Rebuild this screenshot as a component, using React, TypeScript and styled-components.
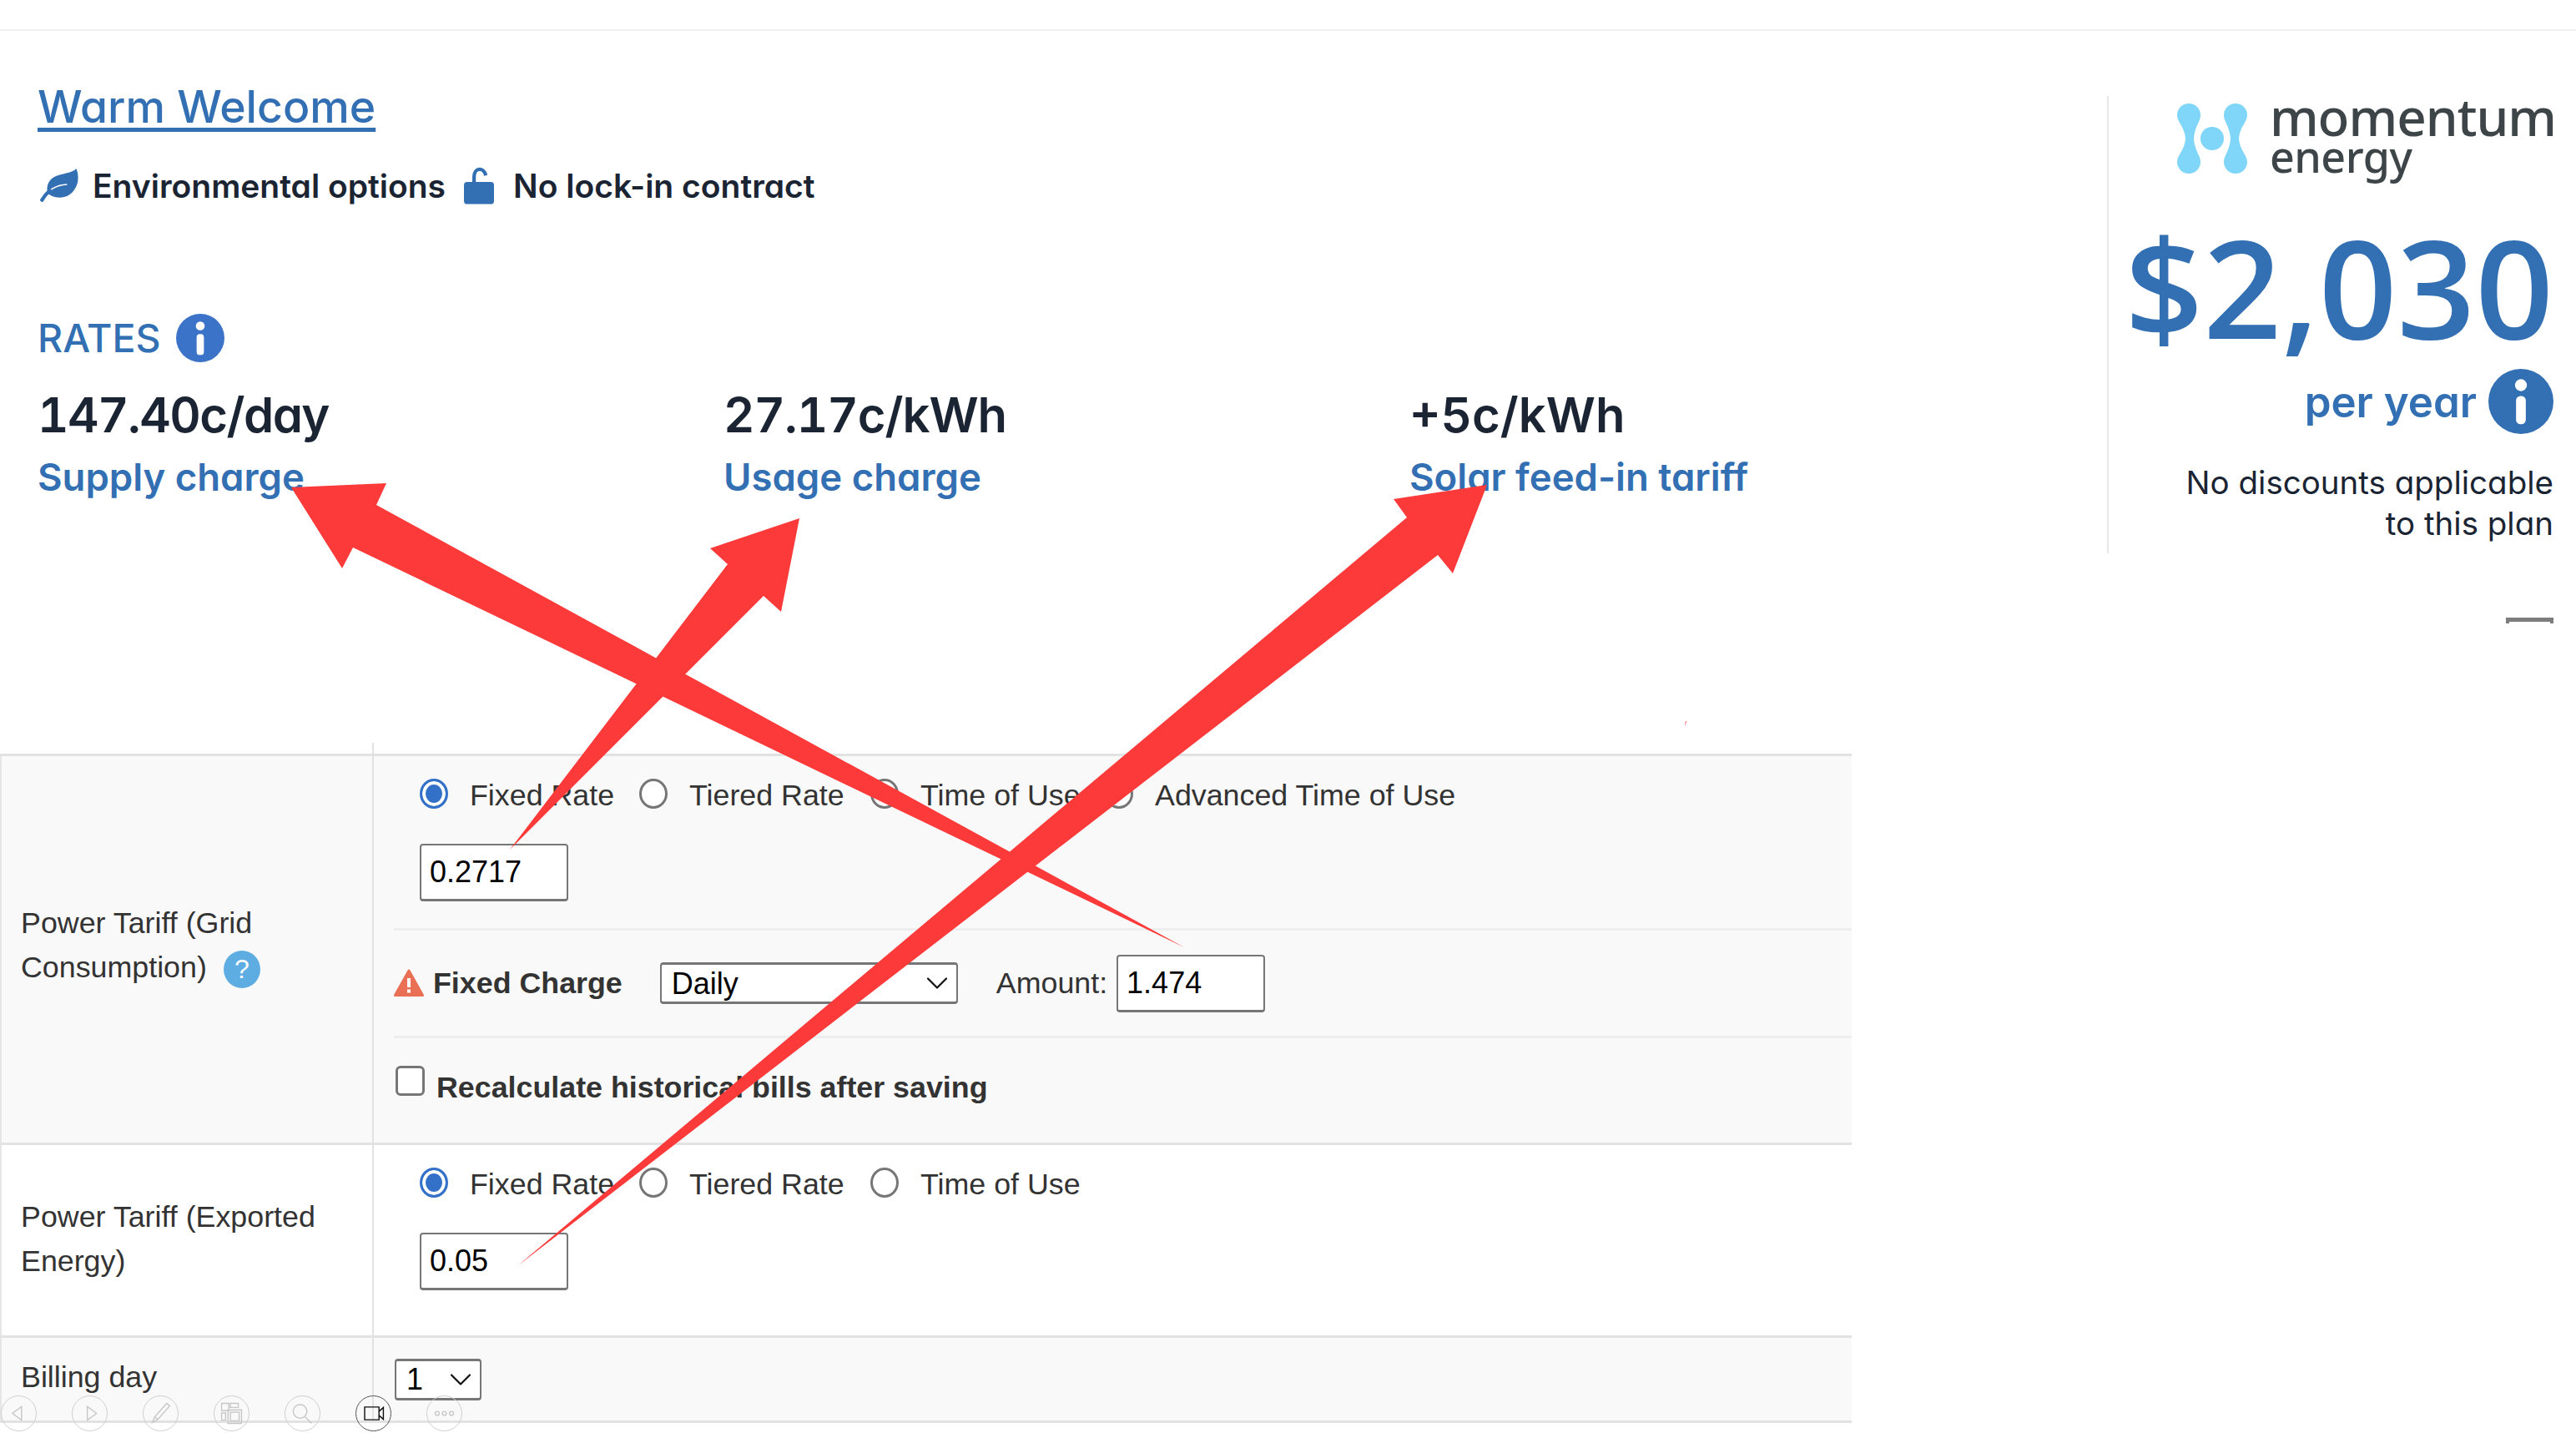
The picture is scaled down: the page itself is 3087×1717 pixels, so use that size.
import styled, { createGlobalStyle } from 'styled-components';
import { ChevronDown } from 'lucide-react';

const GlobalStyle = createGlobalStyle`
  html, body {
    margin: 0;
    padding: 0;
    background: #fff;
  }
`;

const blue = '#336fb3';
const ink = '#1b2433';
const uiFont = `Inter, "Noto Sans", sans-serif`;
const tableFont = `"Liberation Sans", Arial, sans-serif`;

const Page = styled.div`
  position: relative;
  width: 3087px;
  height: 1717px;
  overflow: hidden;
  font-family: ${uiFont};
  font-feature-settings: 'cv11' 1;
  color: ${ink};
`;

const TopBar = styled.div`
  height: 35px;
  border-bottom: 2px solid #f0f0f0;
`;

const Summary = styled.section`
  display: flex;
  height: 853px;
`;

const PlanInfo = styled.div`
  flex: 1;
  padding: 61px 0 0 45px;
`;

const PlanTitle = styled.a`
  display: inline-block;
  font-size: 53.500px;
  line-height: 60px;
  font-weight: 500;
  color: ${blue};
  text-decoration: underline;
  text-decoration-thickness: 5px;
  text-underline-offset: 6px;
`;

const Features = styled.div`
  display: flex;
  align-items: center;
  height: 50px;
  margin: 39px 0 0 3px;
  font-size: 39px;
  font-weight: 600;
`;

const Feature = styled.div`
  display: flex;
  align-items: center;
  gap: ${({ $gap }: { $gap: number }) => $gap}px;
  margin-right: 22px;
`;

const RatesHeading = styled.h2`
  display: flex;
  align-items: center;
  gap: 18px;
  height: 60px;
  margin: 128px 0 0;
  font-size: 46.500px;
  font-weight: 500;
  color: ${blue};
`;

const RateGrid = styled.div`
  display: grid;
  grid-template-columns: repeat(3, 822px);
  margin-top: 27px;
`;

const RateValue = styled.div<{ $tracking: number }>`
  font-size: 58px;
  line-height: 70px;
  font-weight: 600;
  font-variant-numeric: tabular-nums;
  letter-spacing: ${({ $tracking }) => $tracking}px;
`;

const RateName = styled.div`
  margin-top: 10px;
  font-size: 45.500px;
  line-height: 60px;
  font-weight: 600;
  color: ${blue};
`;

const PriceColumn = styled.aside`
  display: flex;
  flex-direction: column;
  width: 562px;
  padding-top: 78px;
`;

const PricePanel = styled.div`
  display: flex;
  flex-direction: column;
  align-items: flex-end;
  height: 548px;
  padding-right: 27px;
  border-left: 2px solid #e8e8e8;
`;

const Logo = styled.div`
  display: flex;
  gap: 27px;
  margin: 9px -3px 0 0;
`;

const LogoWords = styled.div`
  margin-top: -10px;
  color: #3d4548;
  font-family: "Noto Sans", sans-serif;
  font-weight: 500;
  font-feature-settings: normal;
`;

const LogoLine = styled.div<{ $size: number }>`
  font-size: ${({ $size }) => $size}px;
  line-height: ${({ $size }) => ($size === 62 ? 50 : 46)}px;
  letter-spacing: ${({ $size }) => ($size === 62 ? -1 : -0.5)}px;
`;

const Price = styled.div`
  margin-top: 58px;
  font-family: "Open Sans", sans-serif;
  font-size: 164px;
  line-height: 150px;
  font-weight: 600;
  color: ${blue};
`;

const PerYear = styled.div`
  display: flex;
  align-items: center;
  gap: 14px;
  height: 78px;
  margin-top: 24px;
  font-size: 51px;
  font-weight: 600;
  color: ${blue};
`;

const Discounts = styled.div`
  margin-top: 34px;
  font-size: 38.500px;
  line-height: 49px;
  text-align: right;
`;

const CollapsedTab = styled.div`
  align-self: flex-end;
  box-sizing: border-box;
  width: 57px;
  height: 7px;
  margin: 77px 27px 0 0;
  border: 4px solid #7d7d7d;
  border-top-width: 5px;
  border-bottom: 0;
`;

const SettingsTable = styled.div`
  width: 2219px;
  font-family: ${tableFont};
  font-feature-settings: normal;
  font-size: 35.800px;
  color: #333;
`;

const Row = styled.div<{ $height: number; $shaded?: boolean; $bare?: boolean; $last?: boolean }>`
  display: grid;
  grid-template-columns: 448px 1fr;
  box-sizing: border-box;
  height: ${({ $height }) => $height}px;
  background: ${({ $shaded }) => ($shaded ? '#f9f9f9' : '#fff')};
  border-top: ${({ $bare }) => ($bare ? '0' : '3px solid #e2e2e2')};
  border-bottom: ${({ $last }) => ($last ? '3px solid #e2e2e2' : '0')};
`;

const LabelCell = styled.div<{ $bare?: boolean; $lift?: number }>`
  display: flex;
  align-items: center;
  padding: 0 24px ${({ $lift }) => $lift ?? 0}px 23px;
  border-left: ${({ $bare }) => ($bare ? '0' : '2px solid #e6e6e6')};
  border-right: 2px solid #e2e2e2;
  line-height: 53px;
`;

const LabelText = styled.div`
  width: 100%;
`;

const HelpBadge = styled.span`
  display: inline-flex;
  align-items: center;
  justify-content: center;
  width: 44px;
  height: 45px;
  margin-left: 20px;
  border-radius: 50%;
  background: #5dade2;
  color: #fff;
  font-size: 32px;
  vertical-align: middle;
`;

const ValueCell = styled.div`
  display: flex;
  flex-direction: column;
  min-width: 0;
`;

const Block = styled.div<{ $height: number; $divided?: boolean }>`
  box-sizing: border-box;
  height: ${({ $height }) => $height}px;
  margin-left: 24px;
  border-bottom: ${({ $divided }) => ($divided ? '3px solid #eeeeee' : '0')};
`;

const RadioGroup = styled.div`
  display: flex;
  align-items: center;
  height: 36px;
  margin: 27px 0 0 31px;
`;

const RadioLabel = styled.label<{ $width: number }>`
  display: flex;
  align-items: center;
  gap: 26px;
  width: ${({ $width }) => $width}px;
`;

const RadioText = styled.span`
  padding-top: 4px;
`;

const Radio = styled.input`
  flex: none;
  box-sizing: border-box;
  width: 34px;
  height: 36px;
  margin: 0;
  appearance: none;
  background: #fff;
  border: 3px solid #767676;
  border-radius: 50%;

  &:checked {
    border-color: #3370c8;
    background: #3370c8;
    box-shadow: inset 0 0 0 4px #fff;
  }
`;

const NumberInput = styled.input<{ $width: number }>`
  display: block;
  box-sizing: border-box;
  width: ${({ $width }) => $width}px;
  height: 69px;
  padding: 0 10px;
  background: #fff;
  border: 2px solid #767676;
  border-bottom-width: 3px;
  border-radius: 4px;
  font: 36px ${tableFont};
  color: #000;
`;

const RateInput = styled.div`
  margin: 42px 0 0 31px;
`;

const ChargeRow = styled.div`
  display: flex;
  align-items: center;
  height: 100%;
  padding-bottom: 3px;
`;

const BoldLabel = styled.span`
  font-weight: 700;
`;

const FixedChargeLabel = styled(BoldLabel)`
  margin-left: 11px;
`;

const SelectWrap = styled.div<{ $width: number; $left: number; $right: number }>`
  position: relative;
  flex: none;
  width: ${({ $width }) => $width}px;
  margin: 0 ${({ $right }) => $right}px 0 ${({ $left }) => $left}px;

  svg {
    position: absolute;
    top: 3px;
    right: 3px;
    color: #111;
    pointer-events: none;
  }
`;

const Select = styled.select`
  display: block;
  box-sizing: border-box;
  width: 100%;
  height: 50px;
  padding: 0 12px;
  appearance: none;
  background: #fff;
  border: 2px solid #767676;
  border-top-width: 3px;
  border-bottom-width: 3px;
  border-radius: 4px;
  font: 36px ${tableFont};
  color: #000;
`;

const AmountLabel = styled.span`
  margin-right: 11px;
`;

const RecalculateRow = styled.label`
  display: flex;
  align-items: flex-start;
  padding-top: 33px;
`;

const Checkbox = styled.input`
  flex: none;
  box-sizing: border-box;
  width: 35px;
  height: 36px;
  margin: 0 14px 0 2px;
  appearance: none;
  background: #fff;
  border: 3px solid #767676;
  border-radius: 6px;
`;

const RecalculateText = styled(BoldLabel)`
  margin-top: 6px;
`;

const BillingCell = styled.div`
  display: flex;
  align-items: center;
  height: 100%;
  padding-left: 25px;
`;

const Toolbar = styled.div`
  position: absolute;
  left: 1px;
  bottom: 2px;
  display: flex;
  gap: 42px;
`;

const ToolButton = styled.button<{ $active?: boolean }>`
  display: flex;
  align-items: center;
  justify-content: center;
  width: 43px;
  height: 43px;
  padding: 0;
  background: transparent;
  border: 1px solid ${({ $active }) => ($active ? '#555' : '#cfcfcf')};
  border-radius: 50%;
  color: ${({ $active }) => ($active ? '#111' : '#c8c8c8')};
`;

const ArrowLayer = styled.svg`
  position: absolute;
  top: 0;
  left: 0;
  pointer-events: none;
`;

function InfoIcon({ size, color }: { size: number; color: string }) {
  return (
    <svg width={size} height={size} viewBox="0 0 60 60">
      <circle cx="30" cy="30" r="30" fill={color} />
      <circle cx="30" cy="15" r="5.5" fill="#fff" />
      <rect x="25.5" y="25" width="9" height="26" rx="4" fill="#fff" />
    </svg>
  );
}

function LeafIcon() {
  return (
    <svg width="47" height="40" viewBox="55 45 141 120">
      <path d="M185 45C170 62 135 62 112 72C88 82 76 105 82 132C100 155 170 165 190 95C194 75 191 58 185 45Z" fill={blue} />
      <path d="M62 158C82 122 112 104 152 102" fill="none" stroke="#fff" strokeWidth="5" />
      <path d="M62 158C70 144 78 134 90 124" fill="none" stroke={blue} strokeWidth="13" strokeLinecap="round" />
    </svg>
  );
}

function LockIcon() {
  return (
    <svg width="36" height="45" viewBox="52 38 110 135">
      <rect x="52" y="92" width="110" height="81" rx="12" fill={blue} />
      <path d="M89 96V74C89 38 124 36 132 68" fill="none" stroke={blue} strokeWidth="13" />
    </svg>
  );
}

function WarningIcon() {
  return (
    <svg width="36" height="34" viewBox="0 0 36 34">
      <path d="M18 2L34.500 31.500H1.500Z" fill="#e96f55" stroke="#e96f55" strokeWidth="3" strokeLinejoin="round" />
      <rect x="16" y="11" width="4" height="11" fill="#fff" />
      <rect x="16" y="24.500" width="4" height="4" fill="#fff" />
    </svg>
  );
}

function LogoMark() {
  return (
    <svg width="84" height="84" viewBox="0 0 84 84" fill="#7fd6f8">
      <path d="M0 14A14 14 0 0 1 28 14C28 22 21 27 20 42C21 57 28 62 28 70A14 14 0 0 1 0 70C0 62 9 56 10 42C9 28 0 22 0 14Z" />
      <path d="M56 14A14 14 0 0 1 84 14C84 22 75 28 74 42C75 56 84 62 84 70A14 14 0 0 1 56 70C56 62 63 57 64 42C63 27 56 22 56 14Z" />
      <circle cx="42" cy="42" r="14" />
    </svg>
  );
}

const tools = [
  <path key="prev" d="M25 13L13.500 21.500L25 30Z" />,
  <path key="next" d="M18.500 13L30 21.500L18.500 30Z" />,
  <path key="pen" d="M11 33L14 26L29 9L33 12L18 29ZM14 26L18 29" />,
  <path key="pages" d="M9 9H18V18H9ZM20 9H30V14H20ZM9 21H14V30H9ZM17 17H34V34H17ZM20 20H31V31H20Z" />,
  <path key="search" d="M18.500 10.500A8.500 8.500 0 1 1 18.400 10.500ZM25 26L33 34" />,
  <path key="video" d="M10.500 13.500H28.500V29.500H10.500ZM28.500 19L34 14V29L28.500 24" />,
  <path key="more" d="M10 21.500A2.500 2.500 0 1 1 15 21.500A2.500 2.500 0 1 1 10 21.500ZM19 21.500A2.500 2.500 0 1 1 24 21.500A2.500 2.500 0 1 1 19 21.500ZM28 21.500A2.500 2.500 0 1 1 33 21.500A2.500 2.500 0 1 1 28 21.500Z" />,
];

const rates = [
  { value: '147.40c/day', name: 'Supply charge', tracking: -1.5 },
  { value: '27.17c/kWh', name: 'Usage charge', tracking: -1 },
  { value: '+5c/kWh', name: 'Solar feed-in tariff', tracking: 0 },
];

function RateChoice({ group, options }: { group: string; options: [string, number][] }) {
  return (
    <RadioGroup>
      {options.map(([label, width], i) => (
        <RadioLabel key={label} $width={width}>
          <Radio type="radio" name={group} defaultChecked={i === 0} />
          <RadioText>{label}</RadioText>
        </RadioLabel>
      ))}
    </RadioGroup>
  );
}

export default function App() {
  return (
    <>
      <GlobalStyle />
      <Page>
        <TopBar />
        <Summary>
          <PlanInfo>
            <PlanTitle href="#">Warm Welcome</PlanTitle>
            <Features>
              <Feature $gap={16}>
                <LeafIcon />
                Environmental options
              </Feature>
              <Feature $gap={23}>
                <LockIcon />
                No lock-in contract
              </Feature>
            </Features>
            <RatesHeading>
              RATES
              <InfoIcon size={58} color="#3b73c8" />
            </RatesHeading>
            <RateGrid>
              {rates.map((rate) => (
                <div key={rate.name}>
                  <RateValue $tracking={rate.tracking}>{rate.value}</RateValue>
                  <RateName>{rate.name}</RateName>
                </div>
              ))}
            </RateGrid>
          </PlanInfo>
          <PriceColumn>
            <PricePanel>
              <Logo>
                <LogoMark />
                <LogoWords>
                  <LogoLine $size={62}>momentum</LogoLine>
                  <LogoLine $size={52}>energy</LogoLine>
                </LogoWords>
              </Logo>
              <Price>$2,030</Price>
              <PerYear>
                per year
                <InfoIcon size={78} color={blue} />
              </PerYear>
              <Discounts>
                No discounts applicable
                <br />
                to this plan
              </Discounts>
            </PricePanel>
            <CollapsedTab />
          </PriceColumn>
        </Summary>
        <SettingsTable>
          <Row $height={13} $bare>
            <LabelCell $bare />
            <div />
          </Row>
          <Row $height={466} $shaded>
            <LabelCell $lift={10}>
              <LabelText>
                Power Tariff (Grid
                <br />
                Consumption)
                <HelpBadge>?</HelpBadge>
              </LabelText>
            </LabelCell>
            <ValueCell>
              <Block $height={209} $divided>
                <RateChoice
                  group="grid"
                  options={[
                    ['Fixed Rate', 263],
                    ['Tiered Rate', 277],
                    ['Time of Use', 281],
                    ['Advanced Time of Use', 440],
                  ]}
                />
                <RateInput>
                  <NumberInput $width={178} defaultValue="0.2717" />
                </RateInput>
              </Block>
              <Block $height={129} $divided>
                <ChargeRow>
                  <WarningIcon />
                  <FixedChargeLabel>Fixed Charge</FixedChargeLabel>
                  <SelectWrap $width={357} $left={45} $right={46}>
                    <Select defaultValue="Daily">
                      <option>Daily</option>
                      <option>Monthly</option>
                    </Select>
                    <ChevronDown size={44} strokeWidth={1.2} />
                  </SelectWrap>
                  <AmountLabel>Amount:</AmountLabel>
                  <NumberInput $width={178} defaultValue="1.474" />
                </ChargeRow>
              </Block>
              <Block $height={125}>
                <RecalculateRow>
                  <Checkbox type="checkbox" />
                  <RecalculateText>Recalculate historical bills after saving</RecalculateText>
                </RecalculateRow>
              </Block>
            </ValueCell>
          </Row>
          <Row $height={231}>
            <LabelCell $lift={3}>
              <LabelText>
                Power Tariff (Exported
                <br />
                Energy)
              </LabelText>
            </LabelCell>
            <ValueCell>
              <Block $height={228}>
                <RateChoice
                  group="export"
                  options={[
                    ['Fixed Rate', 263],
                    ['Tiered Rate', 277],
                    ['Time of Use', 281],
                  ]}
                />
                <RateInput>
                  <NumberInput $width={178} defaultValue="0.05" />
                </RateInput>
              </Block>
            </ValueCell>
          </Row>
          <Row $height={105} $shaded $last>
            <LabelCell $lift={4}>Billing day</LabelCell>
            <BillingCell>
              <SelectWrap $width={104} $left={0} $right={0}>
                <Select defaultValue="1">
                  <option>1</option>
                  <option>2</option>
                </Select>
                <ChevronDown size={44} strokeWidth={1.2} />
              </SelectWrap>
            </BillingCell>
          </Row>
        </SettingsTable>
        <Toolbar>
          {tools.map((icon, i) => (
            <ToolButton key={i} $active={i === 5}>
              <svg width="43" height="43" viewBox="0 0 43 43" fill="none" stroke="currentColor" strokeWidth="1.500">
                {icon}
              </svg>
            </ToolButton>
          ))}
        </Toolbar>
        <ArrowLayer width="3087" height="1717" viewBox="0 0 3087 1717">
          <g fill="#fd3a3a">
            <polygon points="349,584 463,579 451,605 1419,1135 423,656 410,681" />
            <polygon points="958,621 936,733 915,714 611,1018 872,676 851,657" />
            <polygon points="1782,581 1741,687 1723,665 620,1517 1686,620 1670,598" />
            <polygon points="2019,871 2020,864 2021,864" />
          </g>
        </ArrowLayer>
      </Page>
    </>
  );
}
